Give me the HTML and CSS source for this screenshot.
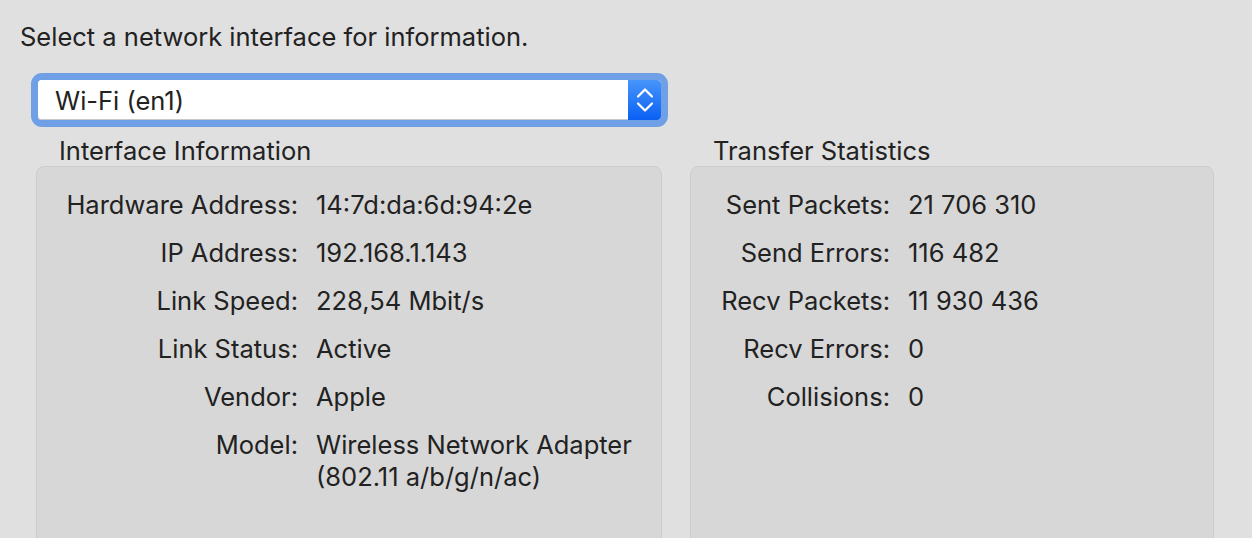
FILE: index.html
```html
<!DOCTYPE html>
<html lang="en">

<head>
  <meta charset="UTF-8">
  <meta name="viewport" content="width=device-width, initial-scale=1.0">
  <title>Network Info</title>
  <link rel="stylesheet" href="styles.css">
</head>

<body>
  <div class="wrapper">
    <p class="intro">Select a network interface for information.</p>

    <div class="popup">
      <div class="popupField">
        <span class="popupText">Wi-Fi (en1)</span>
        <span class="popupButton">
          <svg width="18" height="26" viewBox="0 0 18 26">
            <path d="M2 9.5 L9 2.5 L16 9.5" fill="none" stroke="#fff" stroke-width="2.2" stroke-linecap="round" stroke-linejoin="round"/>
            <path d="M2 16.5 L9 23.5 L16 16.5" fill="none" stroke="#fff" stroke-width="2.2" stroke-linecap="round" stroke-linejoin="round"/>
          </svg>
        </span>
      </div>
    </div>

    <div class="groups">
      <section class="group groupLeft">
        <h2>Interface Information</h2>
        <div class="box">
          <div class="infoGrid">
            <span class="label">Hardware Address:</span><span class="value">14:7d:da:6d:94:2e</span>
            <span class="label">IP Address:</span><span class="value">192.168.1.143</span>
            <span class="label">Link Speed:</span><span class="value">228,54 Mbit/s</span>
            <span class="label">Link Status:</span><span class="value">Active</span>
            <span class="label">Vendor:</span><span class="value">Apple</span>
            <span class="label">Model:</span><span class="value">Wireless Network Adapter<br>(802.11 a/b/g/n/ac)</span>
          </div>
        </div>
      </section>

      <section class="group groupRight">
        <h2>Transfer Statistics</h2>
        <div class="box">
          <div class="infoGrid">
            <span class="label">Sent Packets:</span><span class="value">21 706 310</span>
            <span class="label">Send Errors:</span><span class="value">116 482</span>
            <span class="label">Recv Packets:</span><span class="value">11 930 436</span>
            <span class="label">Recv Errors:</span><span class="value">0</span>
            <span class="label">Collisions:</span><span class="value">0</span>
          </div>
        </div>
      </section>
    </div>
  </div>
</body>

</html>
```

FILE: styles.css
```css
body {
  font-family: Inter, "Liberation Sans", sans-serif;
  margin: 0;
  padding: 0;
  background-color: #e0e0e0;
  color: #222;
  overflow: hidden;
}

.wrapper {
  padding: 22px 0 0 20px;
}

.intro {
  margin: 0;
  font-size: 25.5px;
  line-height: 30px;
}

/* Popup button with focus ring */
.popup {
  width: 623px;
  height: 40px;
  margin: 21px 0 0 11px;
  border: 7px solid #6fa0e6;
  border-radius: 11px;
}

.popupField {
  display: flex;
  align-items: center;
  height: 100%;
  background-color: #fff;
  border-radius: 4px;
  box-shadow: inset 0 -1px 0 #c8c8c8;
  overflow: hidden;
}

.popupText {
  flex: 1;
  padding-left: 17px;
  font-size: 25.5px;
}

.popupButton {
  display: flex;
  align-items: center;
  justify-content: center;
  width: 33px;
  height: 100%;
  background: linear-gradient(#4795fa, #0a60f5);
}

/* Group boxes */
.groups {
  display: flex;
  gap: 28px;
  margin: 9px 0 0 16px;
}

.group h2 {
  margin: 0 0 0 23px;
  font-size: 25.5px;
  font-weight: normal;
  line-height: 30px;
}

.groupLeft {
  width: 626px;
}

.groupRight {
  width: 524px;
}

.box {
  height: 400px;
  padding-top: 22px;
  background-color: #d7d7d7;
  border: 1px solid #cdcdcd;
  border-radius: 8px;
  box-sizing: border-box;
}

.infoGrid {
  display: grid;
  column-gap: 18px;
  row-gap: 16px;
  font-size: 25.5px;
  line-height: 32px;
}

.groupLeft .infoGrid {
  grid-template-columns: 261px 1fr;
}

.groupRight .infoGrid {
  grid-template-columns: 199px 1fr;
}

.label {
  text-align: right;
}
```
